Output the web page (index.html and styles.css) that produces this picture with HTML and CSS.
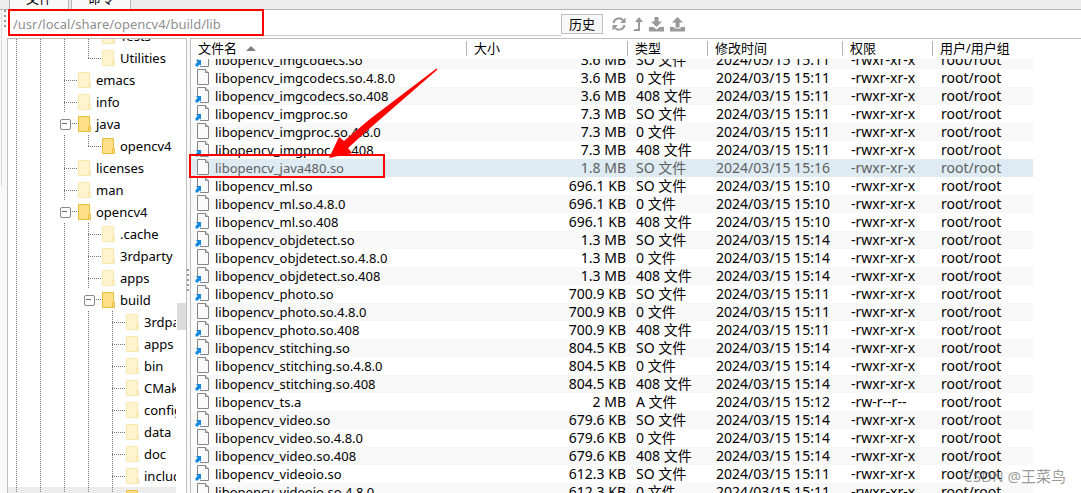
FILE: index.html
```html
<!doctype html>
<html lang="zh-CN">
<head>
	<title>文件</title>
	<meta charset="utf-8" />
	<link rel="stylesheet" href="styles.css">
</head>
<body>
	<svg class="defs" aria-hidden="true">
		<symbol id="folder" viewBox="0 0 13 16">
			<path d="M.5.5h11v15H.5z" fill="var(--fill)" stroke="var(--edge)"/>
			<path d="M10.5 10.5h2v5h-2z" fill="var(--fill)" stroke="var(--edge)"/>
		</symbol>
		<symbol id="file" viewBox="0 0 15 16">
			<path d="M2.500.5h8l3 3v12h-11z" fill="#fafafa" stroke="#858585"/>
			<path d="M10.500.5v3h3" fill="#ddd" stroke="#858585"/>
		</symbol>
		<symbol id="link" viewBox="0 0 15 16">
			<use href="#file"/>
			<path d="M0 9h5v7H0z" fill="#fff"/>
			<path d="M1 9h5v5.500l-1.500-1L3 15.500H.5V13l2-2z" fill="#1688dc"/>
		</symbol>
	</svg>

	<nav class="tabs">
		<button class="tab">文件</button>
		<button class="tab">命令</button>
	</nav>

	<div class="main">
		<div class="gutter"><span class="grip"></span></div>
		<div class="content">
			<form class="address">
				<input type="text" class="path" aria-label="路径" value="/usr/local/share/opencv4/build/lib">
				<button type="button" class="history">历史</button>
				<button type="button" class="tool" aria-label="刷新">
					<svg width="14" height="14" viewBox="0 0 14 14" fill="none" stroke="#999" stroke-width="2">
						<path d="M1.500 6A5.500 5.500 0 0 1 11 3.200M12.500 8A5.500 5.500 0 0 1 3 10.800"/>
						<path d="M13.500.5v5.500H8zM.5 13.500V8H6z" fill="#999" stroke="none"/>
					</svg>
				</button>
				<button type="button" class="tool up" aria-label="上级">
					<svg width="10" height="14" viewBox="0 0 10 14" fill="#999">
						<path d="M6 0l4 5H7v9H0l2-2h3V5H2z"/>
					</svg>
				</button>
				<button type="button" class="tool" aria-label="下载">
					<svg width="15" height="15" viewBox="0 0 15 15" fill="#999">
						<path d="M5.500 0h4v4.500H13L7.500 10 2 4.500h3.500z"/>
						<path d="M0 10h4.500l3 2.500 3-2.500H15v4.500H0z"/>
					</svg>
				</button>
				<button type="button" class="tool" aria-label="上传">
					<svg width="15" height="15" viewBox="0 0 15 15" fill="#999">
						<path d="M7.500 0L13 5.500H9.500v5h-4v-5H2z"/>
						<path d="M0 10h4.500v1.500h6V10H15v4.500H0z"/>
					</svg>
				</button>
				<span class="mark mark-path"></span>
			</form>

			<div class="panes">
				<div class="tree">
					<div class="nodes">
						<div class="node"><i></i><i></i><i></i><b></b><svg class="folder"><use href="#folder"/></svg>Tests</div>
						<div class="node"><i></i><i></i><i></i><b class="last"></b><svg class="folder"><use href="#folder"/></svg>Utilities</div>
						<div class="node"><i></i><i></i><b></b><svg class="folder"><use href="#folder"/></svg>emacs</div>
						<div class="node"><i></i><i></i><b></b><svg class="folder"><use href="#folder"/></svg>info</div>
						<div class="node"><i></i><i></i><b class="open"></b><svg class="folder loaded"><use href="#folder"/></svg>java</div>
						<div class="node"><i></i><i></i><i></i><b class="last"></b><svg class="folder loaded"><use href="#folder"/></svg>opencv4</div>
						<div class="node"><i></i><i></i><b></b><svg class="folder"><use href="#folder"/></svg>licenses</div>
						<div class="node"><i></i><i></i><b></b><svg class="folder"><use href="#folder"/></svg>man</div>
						<div class="node"><i></i><i></i><b class="open"></b><svg class="folder loaded"><use href="#folder"/></svg>opencv4</div>
						<div class="node"><i></i><i></i><i></i><b></b><svg class="folder"><use href="#folder"/></svg>.cache</div>
						<div class="node"><i></i><i></i><i></i><b></b><svg class="folder"><use href="#folder"/></svg>3rdparty</div>
						<div class="node"><i></i><i></i><i></i><b></b><svg class="folder"><use href="#folder"/></svg>apps</div>
						<div class="node"><i></i><i></i><i></i><b class="open"></b><svg class="folder loaded"><use href="#folder"/></svg>build</div>
						<div class="node"><i></i><i></i><i></i><i></i><b></b><svg class="folder"><use href="#folder"/></svg>3rdparty</div>
						<div class="node"><i></i><i></i><i></i><i></i><b></b><svg class="folder"><use href="#folder"/></svg>apps</div>
						<div class="node"><i></i><i></i><i></i><i></i><b></b><svg class="folder"><use href="#folder"/></svg>bin</div>
						<div class="node"><i></i><i></i><i></i><i></i><b></b><svg class="folder"><use href="#folder"/></svg>CMakeFiles</div>
						<div class="node"><i></i><i></i><i></i><i></i><b></b><svg class="folder"><use href="#folder"/></svg>config</div>
						<div class="node"><i></i><i></i><i></i><i></i><b></b><svg class="folder"><use href="#folder"/></svg>data</div>
						<div class="node"><i></i><i></i><i></i><i></i><b></b><svg class="folder"><use href="#folder"/></svg>doc</div>
						<div class="node"><i></i><i></i><i></i><i></i><b></b><svg class="folder"><use href="#folder"/></svg>include</div>
						<div class="node current"><i></i><i></i><i></i><i></i><b></b><svg class="folder loaded"><use href="#folder"/></svg></div>
					</div>
					<div class="scrollbar"><span class="thumb"></span></div>
				</div>
				<div class="splitter"><span class="grip"></span></div>

				<div class="files">
					<table class="head">
						<colgroup><col class="c-name"><col class="c-size"><col class="c-type"><col class="c-date"><col class="c-perm"><col class="c-user"></colgroup>
						<tr><th>文件名<span class="sort"></span></th><th>大小</th><th>类型</th><th>修改时间</th><th>权限</th><th>用户/用户组</th></tr>
					</table>
					<div class="scroll">
						<table class="rows">
							<colgroup><col class="c-name"><col class="c-size"><col class="c-type"><col class="c-date"><col class="c-perm"><col class="c-user"></colgroup>
							<tr><td><svg><use href="#link"/></svg>libopencv_imgcodecs.so</td><td>3.6 MB</td><td>SO 文件</td><td>2024/03/15 15:11</td><td>-rwxr-xr-x</td><td>root/root</td></tr>
							<tr><td><svg><use href="#file"/></svg>libopencv_imgcodecs.so.4.8.0</td><td>3.6 MB</td><td>0 文件</td><td>2024/03/15 15:11</td><td>-rwxr-xr-x</td><td>root/root</td></tr>
							<tr><td><svg><use href="#link"/></svg>libopencv_imgcodecs.so.408</td><td>3.6 MB</td><td>408 文件</td><td>2024/03/15 15:11</td><td>-rwxr-xr-x</td><td>root/root</td></tr>
							<tr><td><svg><use href="#link"/></svg>libopencv_imgproc.so</td><td>7.3 MB</td><td>SO 文件</td><td>2024/03/15 15:11</td><td>-rwxr-xr-x</td><td>root/root</td></tr>
							<tr><td><svg><use href="#file"/></svg>libopencv_imgproc.so.4.8.0</td><td>7.3 MB</td><td>0 文件</td><td>2024/03/15 15:11</td><td>-rwxr-xr-x</td><td>root/root</td></tr>
							<tr><td><svg><use href="#link"/></svg>libopencv_imgproc.so.408</td><td>7.3 MB</td><td>408 文件</td><td>2024/03/15 15:11</td><td>-rwxr-xr-x</td><td>root/root</td></tr>
							<tr class="selected"><td><svg><use href="#file"/></svg>libopencv_java480.so</td><td>1.8 MB</td><td>SO 文件</td><td>2024/03/15 15:16</td><td>-rwxr-xr-x</td><td>root/root</td></tr>
							<tr><td><svg><use href="#link"/></svg>libopencv_ml.so</td><td>696.1 KB</td><td>SO 文件</td><td>2024/03/15 15:10</td><td>-rwxr-xr-x</td><td>root/root</td></tr>
							<tr><td><svg><use href="#file"/></svg>libopencv_ml.so.4.8.0</td><td>696.1 KB</td><td>0 文件</td><td>2024/03/15 15:10</td><td>-rwxr-xr-x</td><td>root/root</td></tr>
							<tr><td><svg><use href="#link"/></svg>libopencv_ml.so.408</td><td>696.1 KB</td><td>408 文件</td><td>2024/03/15 15:10</td><td>-rwxr-xr-x</td><td>root/root</td></tr>
							<tr><td><svg><use href="#link"/></svg>libopencv_objdetect.so</td><td>1.3 MB</td><td>SO 文件</td><td>2024/03/15 15:14</td><td>-rwxr-xr-x</td><td>root/root</td></tr>
							<tr><td><svg><use href="#file"/></svg>libopencv_objdetect.so.4.8.0</td><td>1.3 MB</td><td>0 文件</td><td>2024/03/15 15:14</td><td>-rwxr-xr-x</td><td>root/root</td></tr>
							<tr><td><svg><use href="#link"/></svg>libopencv_objdetect.so.408</td><td>1.3 MB</td><td>408 文件</td><td>2024/03/15 15:14</td><td>-rwxr-xr-x</td><td>root/root</td></tr>
							<tr><td><svg><use href="#link"/></svg>libopencv_photo.so</td><td>700.9 KB</td><td>SO 文件</td><td>2024/03/15 15:11</td><td>-rwxr-xr-x</td><td>root/root</td></tr>
							<tr><td><svg><use href="#file"/></svg>libopencv_photo.so.4.8.0</td><td>700.9 KB</td><td>0 文件</td><td>2024/03/15 15:11</td><td>-rwxr-xr-x</td><td>root/root</td></tr>
							<tr><td><svg><use href="#link"/></svg>libopencv_photo.so.408</td><td>700.9 KB</td><td>408 文件</td><td>2024/03/15 15:11</td><td>-rwxr-xr-x</td><td>root/root</td></tr>
							<tr><td><svg><use href="#link"/></svg>libopencv_stitching.so</td><td>804.5 KB</td><td>SO 文件</td><td>2024/03/15 15:14</td><td>-rwxr-xr-x</td><td>root/root</td></tr>
							<tr><td><svg><use href="#file"/></svg>libopencv_stitching.so.4.8.0</td><td>804.5 KB</td><td>0 文件</td><td>2024/03/15 15:14</td><td>-rwxr-xr-x</td><td>root/root</td></tr>
							<tr><td><svg><use href="#link"/></svg>libopencv_stitching.so.408</td><td>804.5 KB</td><td>408 文件</td><td>2024/03/15 15:14</td><td>-rwxr-xr-x</td><td>root/root</td></tr>
							<tr><td><svg><use href="#file"/></svg>libopencv_ts.a</td><td>2 MB</td><td>A 文件</td><td>2024/03/15 15:12</td><td>-rw-r--r--</td><td>root/root</td></tr>
							<tr><td><svg><use href="#link"/></svg>libopencv_video.so</td><td>679.6 KB</td><td>SO 文件</td><td>2024/03/15 15:14</td><td>-rwxr-xr-x</td><td>root/root</td></tr>
							<tr><td><svg><use href="#file"/></svg>libopencv_video.so.4.8.0</td><td>679.6 KB</td><td>0 文件</td><td>2024/03/15 15:14</td><td>-rwxr-xr-x</td><td>root/root</td></tr>
							<tr><td><svg><use href="#link"/></svg>libopencv_video.so.408</td><td>679.6 KB</td><td>408 文件</td><td>2024/03/15 15:14</td><td>-rwxr-xr-x</td><td>root/root</td></tr>
							<tr><td><svg><use href="#link"/></svg>libopencv_videoio.so</td><td>612.3 KB</td><td>SO 文件</td><td>2024/03/15 15:11</td><td>-rwxr-xr-x</td><td>root/root</td></tr>
							<tr><td><svg><use href="#file"/></svg>libopencv_videoio.so.4.8.0</td><td>612.3 KB</td><td>0 文件</td><td>2024/03/15 15:11</td><td>-rwxr-xr-x</td><td>root/root</td></tr>
						</table>
					</div>
					<span class="mark mark-file"></span>
					<svg class="arrow" width="110" height="92" viewBox="0 0 110 92">
						<path d="M0 90L10 69l5 4L41 51 107.500.5l1 1L40 61 19 80l4 5z" fill="#f00"/>
					</svg>
				</div>
			</div>
		</div>
	</div>
	<div class="watermark">CSDN @王菜鸟</div>
</body>
</html>
```
FILE: styles.css
```css
* {
	box-sizing: border-box;
}

body {
	margin: 0;
	height: 100vh;
	display: flex;
	flex-direction: column;
	overflow: hidden;
	background: #fff;
	color: #000;
	font: 13px/18px "Noto Sans", "Noto Sans CJK SC", sans-serif;
}

button, input {
	font: inherit;
	color: inherit;
	padding: 0;
	border: 0;
	background: none;
}

.defs {
	position: absolute;
	width: 0;
	height: 0;
}

/* tabs */
.tabs {
	flex: none;
	display: flex;
	align-items: flex-end;
	gap: 2px;
	height: 10px;
	padding-left: 9px;
	background: #ececec;
	border-bottom: 1px solid #b4b4b4;
}

.tab {
	width: 60px;
	height: 20px;
	padding: 0 0 2px;
	background: #f8f8f8;
	border: solid #b4b4b4;
	border-width: 0 1px;
}

.main {
	flex: 1;
	display: flex;
	min-height: 0;
}

.gutter {
	width: 7px;
	padding-left: 4px;
	background: linear-gradient(#d8d8d8, #d8d8d8) 1px 0 / 1px 176px no-repeat #f8f8f8;
}

.grip {
	display: block;
	width: 2px;
	background: repeating-linear-gradient(#999 0 2px, transparent 2px 5px);
}

.gutter .grip {
	height: 20px;
}

.content {
	flex: 1;
	display: flex;
	flex-direction: column;
	min-width: 0;
}

/* address bar */
.address {
	position: relative;
	display: flex;
	align-items: center;
	height: 28px;
	padding-left: 2px;
}

.path {
	width: 552px;
	height: 24px;
	padding-left: 4px;
	color: #8f8f8f;
	border-bottom: 1px solid #c8c8c8;
}

.history {
	width: 42px;
	height: 20px;
	margin-right: 9px;
	border: 1px solid #c0c0c0;
	background: #f8f8f8;
}

.tool {
	display: flex;
	margin-right: 6px;
}

.tool.up {
	margin-left: 1px;
}

.panes {
	flex: 1;
	display: flex;
	min-height: 0;
}

/* directory tree */
.tree {
	width: 180px;
	display: flex;
	overflow: hidden;
	border: 1px solid #c0c0c0;
	border-bottom: 0;
}

.nodes {
	flex: 1;
	overflow: hidden;
	margin-top: -14px;
}

.node {
	display: flex;
	align-items: center;
	height: 22px;
	white-space: nowrap;
}

.node i, .node b {
	position: relative;
	flex: none;
	width: 24px;
	height: 22px;
}

.node b {
	width: 22px;
}

.node i::before, .node b::before {
	content: "";
	position: absolute;
	left: 8px;
	top: 0;
	width: 1px;
	height: 22px;
	background: repeating-linear-gradient(#777 0 1px, transparent 1px 2px);
}

.node b.last::before {
	height: 11px;
}

.node b::after {
	content: "";
	position: absolute;
	left: 8px;
	right: 1px;
	top: 11px;
	height: 1px;
	background: repeating-linear-gradient(90deg, #777 0 1px, transparent 1px 2px);
}

.node b.open {
	background: linear-gradient(#666, #666) 6px 10px / 5px 1px no-repeat;
}

.node b.open::before {
	left: 4px;
	top: 6px;
	width: 9px;
	height: 9px;
	border: 1px solid #888;
	border-radius: 2px;
	background: none;
}

.node b.open::after {
	left: 14px;
	top: 10px;
}

.folder {
	--fill: #fff4cf;
	--edge: #f7e6ae;
	flex: none;
	width: 13px;
	height: 16px;
	margin-right: 5px;
}

.folder.loaded {
	--fill: #ffe08a;
	--edge: #e8bd3c;
}

.current {
	background: #ececec;
}

.scrollbar {
	width: 10px;
	padding: 264px 0 0 1px;
}

.thumb {
	display: block;
	height: 27px;
	background: #dcdcdc;
}

.splitter {
	width: 3px;
	padding-top: 231px;
	background: #f8f8f8;
}

.splitter .grip {
	height: 24px;
}

/* file list */
.files {
	position: relative;
	flex: 1;
	display: flex;
	flex-direction: column;
	min-width: 0;
	border: solid #c0c0c0;
	border-width: 1px 0 0 1px;
}

.scroll {
	flex: 1;
	overflow: hidden;
}

table {
	width: 842px;
	table-layout: fixed;
	border-collapse: collapse;
}

.c-name {
	width: 276px;
}

.c-size {
	width: 161px;
}

.c-type {
	width: 80px;
}

.c-date {
	width: 135px;
}

.c-perm {
	width: 90px;
}

.c-user {
	width: 100px;
}

th {
	height: 20px;
	padding: 0 0 2px 7px;
	text-align: left;
	font-weight: normal;
	background: linear-gradient(#b4b4b4, #b4b4b4) right 2px / 1px 15px no-repeat;
}

th:last-child {
	background: none;
}

.sort {
	display: inline-block;
	margin: 0 0 2px 9px;
	border: 5px solid transparent;
	border-top: 0;
	border-bottom-color: #808080;
}

.rows {
	margin-top: -8px;
}

td {
	height: 18px;
	padding: 0 0 0 8px;
	white-space: nowrap;
	font-size: 14px;
}

td:first-child {
	padding-left: 4px;
	font-size: 13px;
}

td:nth-child(2) {
	padding: 0 2px 0 0;
	text-align: right;
}

td svg {
	width: 15px;
	height: 16px;
	margin-right: 5px;
	vertical-align: top;
}

.rows tr:nth-child(odd) {
	background: #f8f8f8;
}

.rows tr.selected {
	background: #deebf3;
	color: #606060;
}

/* annotations */
.mark {
	position: absolute;
	border: 2px solid #f00;
	pointer-events: none;
}

.mark-path {
	left: 1px;
	top: -1px;
	width: 256px;
	height: 27px;
}

.mark-file {
	left: -2px;
	top: 115px;
	width: 196px;
	height: 24px;
}

.arrow {
	position: absolute;
	left: 138px;
	top: 29px;
}

.watermark {
	position: absolute;
	right: 15px;
	bottom: 8px;
	font-size: 15px;
	color: rgba(110, 110, 110, .7);
}
```
